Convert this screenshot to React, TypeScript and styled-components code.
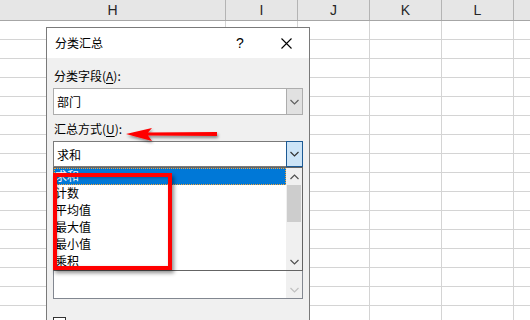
import styled, { createGlobalStyle } from "styled-components"

const GlobalStyle = createGlobalStyle`
    html, body {
        margin: 0;
        padding: 0;
        background: #ffffff;
        overflow: hidden;
    }

    body {
        font-family: "Noto Sans CJK SC", "Noto Sans", sans-serif;
    }
`

const columns = [
    { label: "H", width: 226 },
    { label: "I", width: 72 },
    { label: "J", width: 72 },
    { label: "K", width: 72 },
    { label: "L", width: 72 },
    { label: "", width: 40 },
]

const methods = ["求和", "计数", "平均值", "最大值", "最小值", "乘积"]

const Sheet = styled.div`
    position: relative;
    width: 530px;
    height: 320px;
    overflow: hidden;
    background: #ffffff;
`

const HeaderRow = styled.div`
    display: flex;
    height: 20px;
    background: #e6e6e6;
    border-bottom: 1px solid #a6a6a6;
`

const HeaderCell = styled.div<{ w: number }>`
    flex: 0 0 ${props => props.w}px;
    box-sizing: border-box;
    border-right: 1px solid #b4b4b4;
    display: flex;
    align-items: center;
    justify-content: center;
    font-family: "Liberation Sans", Arial, sans-serif;
    font-size: 14px;
    color: #262626;
`

const GridRow = styled.div`
    display: flex;
    height: 18px;
    border-bottom: 1px solid #d4d4d4;
`

const GridCell = styled.div<{ w: number }>`
    flex: 0 0 ${props => props.w}px;
    box-sizing: border-box;
    border-right: 1px solid #d4d4d4;
`

const Dialog = styled.div`
    position: absolute;
    left: 46px;
    top: 27px;
    width: 264px;
    height: 320px;
    box-sizing: border-box;
    border: 1px solid #7a7a7a;
    background: #f0f0f0;
    display: flex;
    flex-direction: column;
    font-size: 12px;
    color: #000000;
`

const TitleBar = styled.div`
    height: 30px;
    background: #ffffff;
    display: flex;
    align-items: center;
    padding-left: 8px;
`

const Title = styled.span`
    flex: 1;
    font-size: 12px;
    margin-top: -1px;
`

const TitleButton = styled.span`
    width: 46px;
    display: flex;
    justify-content: center;
    align-items: center;
    font-family: "Liberation Sans", Arial, sans-serif;
    font-size: 14px;
`

const Body = styled.div`
    padding: 10px 6px 0 6px;
    display: flex;
    flex-direction: column;
`

const Label = styled.div<{ top?: number }>`
    line-height: 16px;
    padding-left: 1px;
    margin-top: ${props => props.top ?? 0}px;
    margin-bottom: 4px;
`

const Key = styled.span`
    text-decoration: underline;
    text-underline-offset: 2px;
`

const ComboWrap = styled.div`
    position: relative;
`

const Combo = styled.div<{ focused?: boolean }>`
    height: ${props => props.focused ? 26 : 27}px;
    box-sizing: border-box;
    border: 1px solid ${props => props.focused ? "#7a7a7a" : "#adadad"};
    background: #ffffff;
    display: flex;
    align-items: center;
`

const ComboText = styled.span`
    flex: 1;
    padding-left: 3px;
    font-size: 12px;
`

const ComboButton = styled.span<{ focused?: boolean }>`
    width: 17px;
    align-self: stretch;
    box-sizing: border-box;
    margin: -1px -1px -1px 0;
    border: 1px solid ${props => props.focused ? "#1c5a94" : "#adadad"};
    background: ${props => props.focused ? "#cce4f7" : "#e1e1e1"};
    display: flex;
    align-items: center;
    justify-content: center;
`

const DropList = styled.div`
    position: absolute;
    left: 0;
    right: 0;
    top: 26px;
    height: 104px;
    box-sizing: border-box;
    border: 1px solid #646464;
    background: #ffffff;
    display: flex;
    z-index: 2;
`

const Items = styled.div`
    flex: 1;
    display: flex;
    flex-direction: column;
`

const Item = styled.div<{ selected?: boolean }>`
    height: 17px;
    line-height: 16px;
    padding-left: 1px;
    font-size: 12px;
    box-sizing: border-box;
    background: ${props => props.selected ? "#0078d7" : "transparent"};
    color: ${props => props.selected ? "#ffffff" : "#000000"};
    outline: ${props => props.selected ? "1px dotted #f3a33a" : "none"};
    outline-offset: -1px;
`

const ScrollBar = styled.div<{ disabled?: boolean }>`
    width: 16px;
    background: #f0f0f0;
    display: flex;
    flex-direction: column;
    align-items: stretch;
    justify-content: ${props => props.disabled ? "flex-end" : "flex-start"};
`

const ScrollArrow = styled.div`
    height: 17px;
    display: flex;
    align-items: center;
    justify-content: center;
`

const Thumb = styled.div`
    height: 37px;
    margin: 0 1px;
    background: #cdcdcd;
`

const Track = styled.div`
    flex: 1;
`

const ListBox = styled.div`
    height: 110px;
    margin-top: 22px;
    box-sizing: border-box;
    border: 1px solid #828790;
    background: #ffffff;
    display: flex;
    justify-content: flex-end;
`

const CheckRow = styled.div`
    display: flex;
    align-items: center;
    gap: 6px;
    margin-top: 18px;
`

const CheckBox = styled.span`
    width: 13px;
    height: 13px;
    box-sizing: border-box;
    border: 1px solid #333333;
    background: #ffffff;
`

const Highlight = styled.div`
    position: absolute;
    left: 53px;
    top: 173px;
    width: 119px;
    height: 97px;
    box-sizing: border-box;
    border: 4px solid #ff0000;
    box-shadow: 2px 3px 4px rgba(0, 0, 0, 0.45), inset 1px 1px 3px rgba(0, 0, 0, 0.25);
    z-index: 3;
`

const Arrow = styled.svg`
    position: absolute;
    left: 122px;
    top: 125px;
    z-index: 3;
    overflow: visible;
`

const Chevron = ({ dir = "down", color = "#505050" }: { dir?: "up" | "down"; color?: string }) => (
    <svg width="9" height="6" viewBox="0 0 9 6">
        <path
            d={dir === "down" ? "M0.5 1 L4.5 5 L8.5 1" : "M0.5 5 L4.5 1 L8.5 5"}
            fill="none"
            stroke={color}
            strokeWidth="1.2"
        />
    </svg>
)

const App = () => {
    return (
        <>
            <GlobalStyle />
            <Sheet>
                <HeaderRow>
                    {columns.map((c, i) => (
                        <HeaderCell key={i} w={c.width}>{c.label}</HeaderCell>
                    ))}
                </HeaderRow>
                {Array.from({ length: 16 }).map((_, r) => (
                    <GridRow key={r}>
                        {columns.map((c, i) => (
                            <GridCell key={i} w={c.width} />
                        ))}
                    </GridRow>
                ))}

                <Dialog>
                    <TitleBar>
                        <Title>分类汇总</Title>
                        <TitleButton>?</TitleButton>
                        <TitleButton>
                            <svg width="11" height="11" viewBox="0 0 11 11">
                                <path d="M0.5 0.5 L10.5 10.5 M10.5 0.5 L0.5 10.5" stroke="#000" strokeWidth="1.1" />
                            </svg>
                        </TitleButton>
                    </TitleBar>

                    <Body>
                        <Label>分类字段(<Key>A</Key>):</Label>
                        <Combo>
                            <ComboText>部门</ComboText>
                            <ComboButton><Chevron color="#606060" /></ComboButton>
                        </Combo>

                        <Label top={6}>汇总方式(<Key>U</Key>):</Label>
                        <ComboWrap>
                            <Combo focused>
                                <ComboText>求和</ComboText>
                                <ComboButton focused><Chevron color="#333" /></ComboButton>
                            </Combo>
                            <DropList>
                                <Items>
                                    {methods.map((m, i) => (
                                        <Item key={m} selected={i === 0}>{m}</Item>
                                    ))}
                                </Items>
                                <ScrollBar>
                                    <ScrollArrow><Chevron dir="up" /></ScrollArrow>
                                    <Thumb />
                                    <Track />
                                    <ScrollArrow><Chevron /></ScrollArrow>
                                </ScrollBar>
                            </DropList>
                        </ComboWrap>

                        <ListBox>
                            <ScrollBar disabled>
                                <ScrollArrow><Chevron color="#c0c0c0" /></ScrollArrow>
                            </ScrollBar>
                        </ListBox>

                        <CheckRow>
                            <CheckBox />
                        </CheckRow>
                    </Body>
                </Dialog>

                <Arrow width="96" height="20" viewBox="0 0 96 20">
                    <defs>
                        <filter id="sh" x="-10%" y="-50%" width="130%" height="220%">
                            <feDropShadow dx="1" dy="2" stdDeviation="1.5" floodColor="#000" floodOpacity="0.45" />
                        </filter>
                    </defs>
                    <path
                        d="M4 9 L30 3 L26 7.5 L95 7 L95 11 L26 10.5 L30 16 Z"
                        fill="#ff0000"
                        filter="url(#sh)"
                    />
                </Arrow>

                <Highlight />
            </Sheet>
        </>
    )
}

export default App
